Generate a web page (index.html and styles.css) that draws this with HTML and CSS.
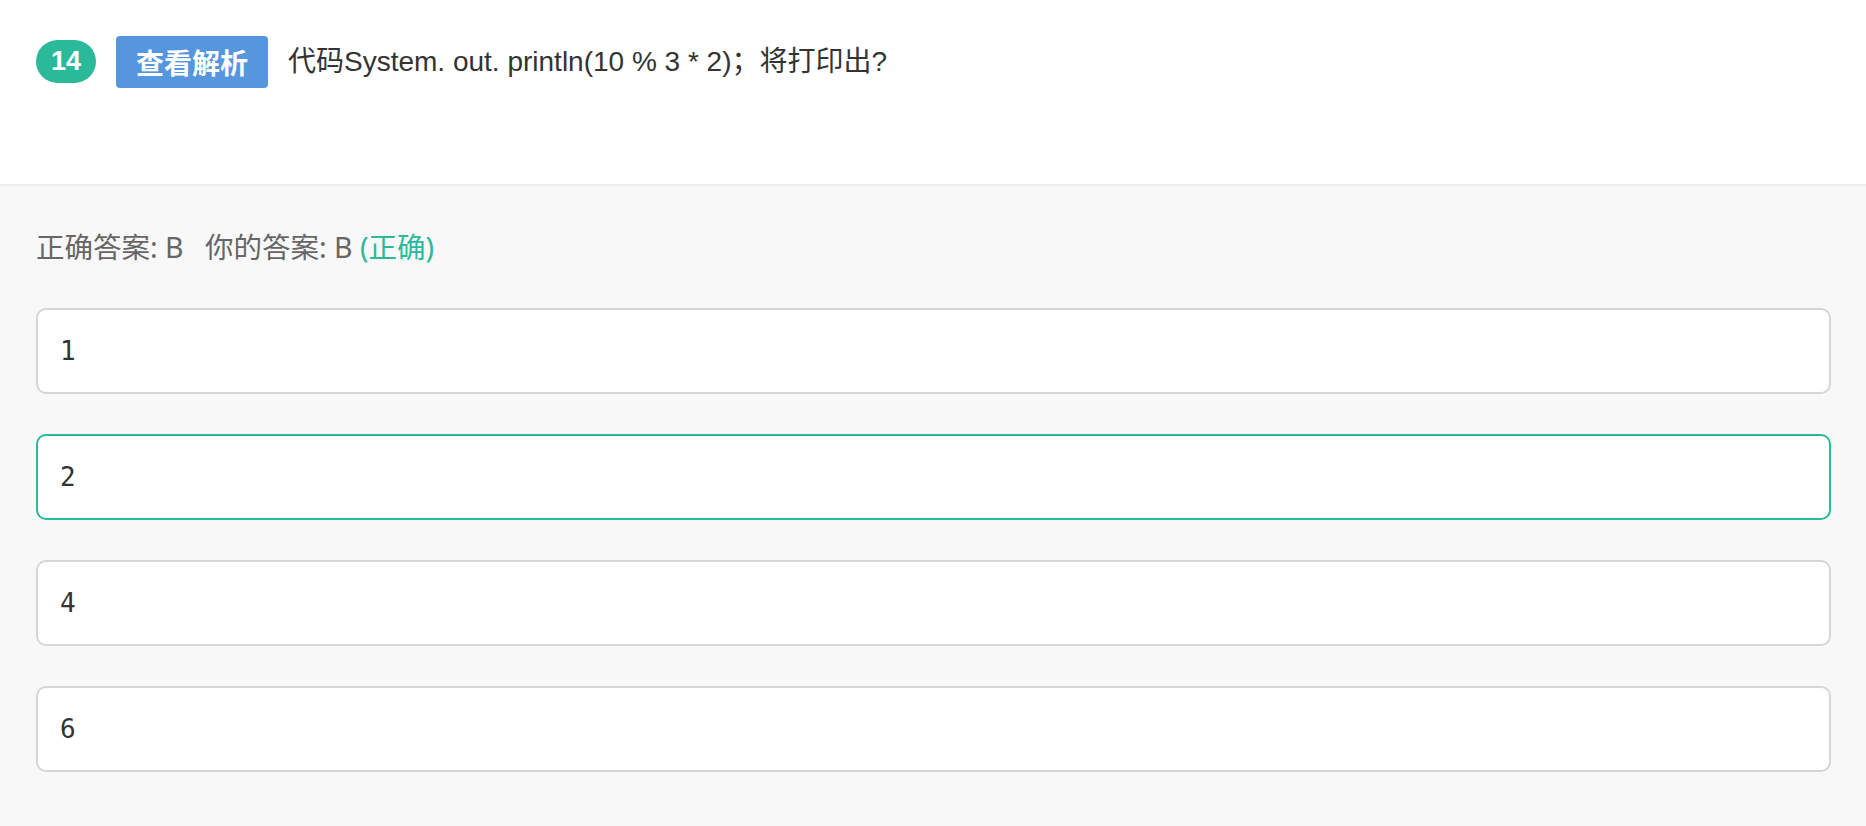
FILE: index.html
```html
<!DOCTYPE html>
<html lang="zh-CN">
<head>
<meta charset="utf-8">
<title>题目 14</title>
<link rel="stylesheet" href="styles.css">
</head>
<body>
<div class="question">
  <span class="num">14</span>
  <span class="analysis-btn">查看解析</span>
  <span class="q-text">代码System. out. println(10 % 3 * 2)；将打印出?</span>
</div>
<div class="answer-area">
  <div class="result">
    <span class="correct-ans">正确答案: B</span>
    <span class="your-ans">你的答案: B <span class="ok">(正确)</span></span>
  </div>
  <div class="options">
    <div class="option">1</div>
    <div class="option selected">2</div>
    <div class="option">4</div>
    <div class="option">6</div>
  </div>
</div>
</body>
</html>
```

FILE: styles.css
```css
* { box-sizing: border-box; }
html, body { margin: 0; padding: 0; }
body {
  background: #f8f8f8;
  min-height: 100vh;
  font-family: "Liberation Sans", "Noto Sans CJK SC", sans-serif;
  color: #333;
}
.question {
  background: #fff;
  height: 186px;
  border-bottom: 2px solid #ebebeb;
  padding: 36px 36px 0;
  display: flex;
  align-items: flex-start;
}
.num {
  width: 60px;
  height: 43px;
  margin-top: 4px;
  border-radius: 22px;
  background: #2bba99;
  color: #fff;
  font-weight: bold;
  font-size: 27px;
  display: flex;
  align-items: center;
  justify-content: center;
  margin-right: 20px;
}
.analysis-btn {
  height: 52px;
  padding: 0 20px;
  border-radius: 4px;
  background: #5596df;
  color: #fff;
  font-family: "Noto Sans CJK SC", sans-serif;
  font-weight: 700;
  font-size: 28px;
  display: flex;
  align-items: center;
  margin-right: 20px;
}
.q-text {
  font-size: 28px;
  line-height: 52px;
  color: #333;
}
.answer-area {
  padding: 41px 35px 0 36px;
}
.result {
  font-family: "Noto Sans", "Noto Sans CJK SC", sans-serif;
  font-size: 28.5px;
  line-height: 40px;
  color: #666;
  margin-bottom: 41px;
}
.your-ans { margin-left: 14px; }
.ok { color: #2bba99; }
.options {
  display: flex;
  flex-direction: column;
  gap: 40px;
}
.option {
  height: 86px;
  background: #fff;
  border: 2px solid #d6d6d6;
  border-radius: 10px;
  padding-left: 22px;
  display: flex;
  align-items: center;
  font-family: "DejaVu Sans Mono", monospace;
  font-size: 26px;
  color: #333;
}
.option.selected { border-color: #2bba99; }
```
